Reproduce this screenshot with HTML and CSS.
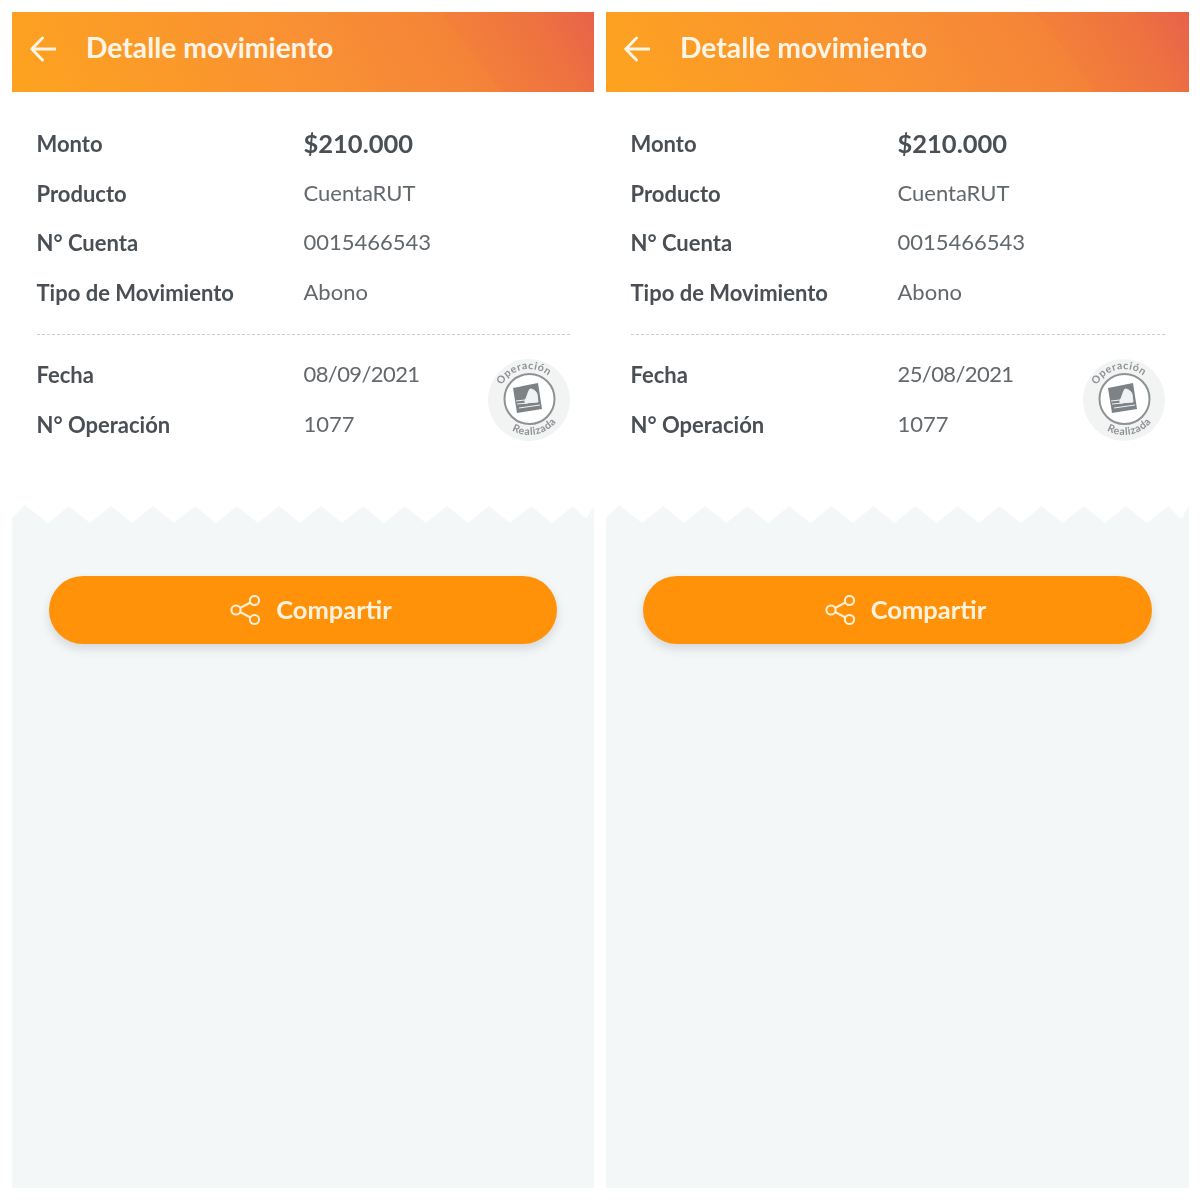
FILE: index.html
```html
<!DOCTYPE html>

<html>

<head>
    <meta charset="UTF-8" />
    <meta name="viewport" content="width=device-width, initial-scale=1.0">
    <link rel="stylesheet" href="styles.css">
</head>

<body>

    <main class="container">

        <section class="screen">
            <header class="topbar">
                <svg class="back-icon" viewBox="0 0 26 26"><path d="M25 13H2M12.5 2 1.8 13l10.7 11"/></svg>
                <h1>Detalle movimiento</h1>
            </header>

            <div class="receipt">
                <dl class="rows">
                    <dt>Monto</dt><dd class="amount">$210.000</dd>
                    <dt>Producto</dt><dd>CuentaRUT</dd>
                    <dt>N° Cuenta</dt><dd>0015466543</dd>
                    <dt>Tipo de Movimiento</dt><dd>Abono</dd>
                </dl>
                <hr class="divider">
                <dl class="rows">
                    <dt>Fecha</dt><dd class="date">08/09/2021</dd>
                    <dt>N° Operación</dt><dd>1077</dd>
                </dl>
                <svg class="stamp" viewBox="0 0 82 82">
                    <defs>
                        <path id="arcTop1" d="M10 41a31 31 0 0 1 62 0"/>
                        <path id="arcBottom1" d="M6 41a35 35 0 0 0 70 0"/>
                    </defs>
                    <circle class="stamp-bg" cx="41" cy="41" r="41"/>
                    <g transform="rotate(-11 41 41)">
                        <text class="stamp-text"><textPath href="#arcTop1" startOffset="50%">Operación</textPath></text>
                        <text class="stamp-text"><textPath href="#arcBottom1" startOffset="50%">Realizada</textPath></text>
                    </g>
                    <circle class="stamp-ring" cx="41.500" cy="40" r="25"/>
                    <path class="stamp-mark" d="M25 29 50 24 54 50 29 54Z"/>
                    <path class="stamp-light" d="M37 41c2-2 3-9 5-11 3 0 6 2 7 5l1 8-13 1Z"/>
                    <path class="stamp-light" d="M28 42l9-1M29 45l11-1M31 49l21-3" />
                </svg>
            </div>

            <svg class="tear" viewBox="0 0 582 24" preserveAspectRatio="none"><path d="M0 16 13 3 36 21 57 4 78 21 99 4 120 21 141 4 162 21 183 4 204 21 225 4 246 21 267 4 288 21 309 4 330 21 351 4 372 21 393 4 414 21 435 4 456 21 477 4 498 21 519 4 540 21 561 4 574 17 582 4V24H0Z"/></svg>

            <div class="actions">
                <button class="share-btn">
                    <svg class="share-icon" viewBox="0 0 30 30"><circle cx="6" cy="15" r="4.6"/><circle cx="24.500" cy="5.500" r="4.600"/><circle cx="24.500" cy="24.500" r="4.600"/><path d="M10 13 20.500 7.500M10 17 20.500 22.500"/></svg>
                    <span class="share-label">Compartir</span>
                </button>
            </div>
        </section>

        <section class="screen">
            <header class="topbar">
                <svg class="back-icon" viewBox="0 0 26 26"><path d="M25 13H2M12.5 2 1.8 13l10.7 11"/></svg>
                <h1>Detalle movimiento</h1>
            </header>

            <div class="receipt">
                <dl class="rows">
                    <dt>Monto</dt><dd class="amount">$210.000</dd>
                    <dt>Producto</dt><dd>CuentaRUT</dd>
                    <dt>N° Cuenta</dt><dd>0015466543</dd>
                    <dt>Tipo de Movimiento</dt><dd>Abono</dd>
                </dl>
                <hr class="divider">
                <dl class="rows">
                    <dt>Fecha</dt><dd class="date">25/08/2021</dd>
                    <dt>N° Operación</dt><dd>1077</dd>
                </dl>
                <svg class="stamp" viewBox="0 0 82 82">
                    <defs>
                        <path id="arcTop2" d="M10 41a31 31 0 0 1 62 0"/>
                        <path id="arcBottom2" d="M6 41a35 35 0 0 0 70 0"/>
                    </defs>
                    <circle class="stamp-bg" cx="41" cy="41" r="41"/>
                    <g transform="rotate(-11 41 41)">
                        <text class="stamp-text"><textPath href="#arcTop2" startOffset="50%">Operación</textPath></text>
                        <text class="stamp-text"><textPath href="#arcBottom2" startOffset="50%">Realizada</textPath></text>
                    </g>
                    <circle class="stamp-ring" cx="41.500" cy="40" r="25"/>
                    <path class="stamp-mark" d="M25 29 50 24 54 50 29 54Z"/>
                    <path class="stamp-light" d="M37 41c2-2 3-9 5-11 3 0 6 2 7 5l1 8-13 1Z"/>
                    <path class="stamp-light" d="M28 42l9-1M29 45l11-1M31 49l21-3" />
                </svg>
            </div>

            <svg class="tear" viewBox="0 0 582 24" preserveAspectRatio="none"><path d="M0 16 13 3 36 21 57 4 78 21 99 4 120 21 141 4 162 21 183 4 204 21 225 4 246 21 267 4 288 21 309 4 330 21 351 4 372 21 393 4 414 21 435 4 456 21 477 4 498 21 519 4 540 21 561 4 574 17 582 4V24H0Z"/></svg>

            <div class="actions">
                <button class="share-btn">
                    <svg class="share-icon" viewBox="0 0 30 30"><circle cx="6" cy="15" r="4.6"/><circle cx="24.500" cy="5.500" r="4.600"/><circle cx="24.500" cy="24.500" r="4.600"/><path d="M10 13 20.500 7.500M10 17 20.500 22.500"/></svg>
                    <span class="share-label">Compartir</span>
                </button>
            </div>
        </section>

    </main>

</body>

</html>
```

FILE: styles.css
```css
* {
    margin: 0;
    padding: 0;
    box-sizing: border-box;
}

body {
    background: #fff;
    font-family: "Lato", "Open Sans", sans-serif;
    color: #454b50;
}

.container {
    display: grid;
    grid-template-columns: 582px 583px;
    gap: 12px;
    padding: 12px 11px 12px 12px;
    height: 1200px;
    filter: blur(.4px);
}

.screen {
    display: flex;
    flex-direction: column;
}

.topbar {
    height: 80px;
    display: flex;
    align-items: center;
    gap: 30px;
    padding: 0 0 6px 18px;
    color: #fff5e6;
    background:
        linear-gradient(53deg, transparent 76%, rgba(232, 90, 70, .08) 76.4%),
        linear-gradient(60deg, #fda31f 0%, #f99034 52%, #f48338 76%, #ee7440 90%, #e8624a 100%);
}

.topbar h1 {
    font-size: 28.300px;
    font-weight: 700;
    line-height: 1;
    margin-bottom: 4px;
}

.back-icon {
    width: 26px;
    height: 26px;
    fill: none;
    stroke: #fff5e6;
    stroke-width: 3;
    stroke-linecap: round;
    stroke-linejoin: round;
}

.receipt {
    position: relative;
    padding: 26px 24px 0 24.500px;
    height: 410px;
}

.rows {
    display: grid;
    grid-template-columns: 267px 1fr;
    grid-auto-rows: 49.5px;
    align-items: center;
    font-size: 22px;
}

.rows dt {
    padding-top: 2px;
    font-weight: 700;
    color: #494f54;
}

.rows dd {
    color: #62686c;
}

.rows .amount {
    font-size: 25.500px;
    font-weight: 700;
    color: #494f54;
}

.rows .date {
    letter-spacing: -.6px;
}

.divider {
    border: 0;
    border-top: 1px dashed #c9cdd0;
    margin: 18px 0 14px;
}

.stamp {
    position: absolute;
    right: 24px;
    top: 267px;
    width: 82px;
    height: 82px;
}

.stamp-bg {
    fill: #f2f3f3;
}

.stamp-text {
    font-size: 10.500px;
    font-weight: 700;
    letter-spacing: .6px;
    text-anchor: middle;
    fill: #8d9195;
}

.stamp-ring {
    fill: #fff;
    stroke: #8f9295;
    stroke-width: 2;
}

.stamp-mark {
    fill: #7d8286;
}

.stamp-light {
    fill: #f1f2f3;
    stroke: #f1f2f3;
    stroke-width: 1;
}

.tear {
    display: block;
    width: 100%;
    height: 24px;
    fill: #f4f7f8;
}

.actions {
    flex: 1;
    padding: 50px 37px 0;
    background: #f4f7f8;
}

.share-btn {
    width: 100%;
    height: 68px;
    padding-left: 16px;
    border: 0;
    border-radius: 34px;
    background: #ff9208;
    box-shadow: 0 5px 10px rgba(70, 80, 90, .18);
    color: #fff3e0;
    font: 700 25.500px "Lato", sans-serif;
    display: flex;
    align-items: center;
    justify-content: center;
    gap: 16px;
}

.share-label {
    margin-bottom: 2px;
}

.share-icon {
    width: 30px;
    height: 30px;
    fill: none;
    stroke: #fff0d8;
    stroke-width: 2;
}
```
